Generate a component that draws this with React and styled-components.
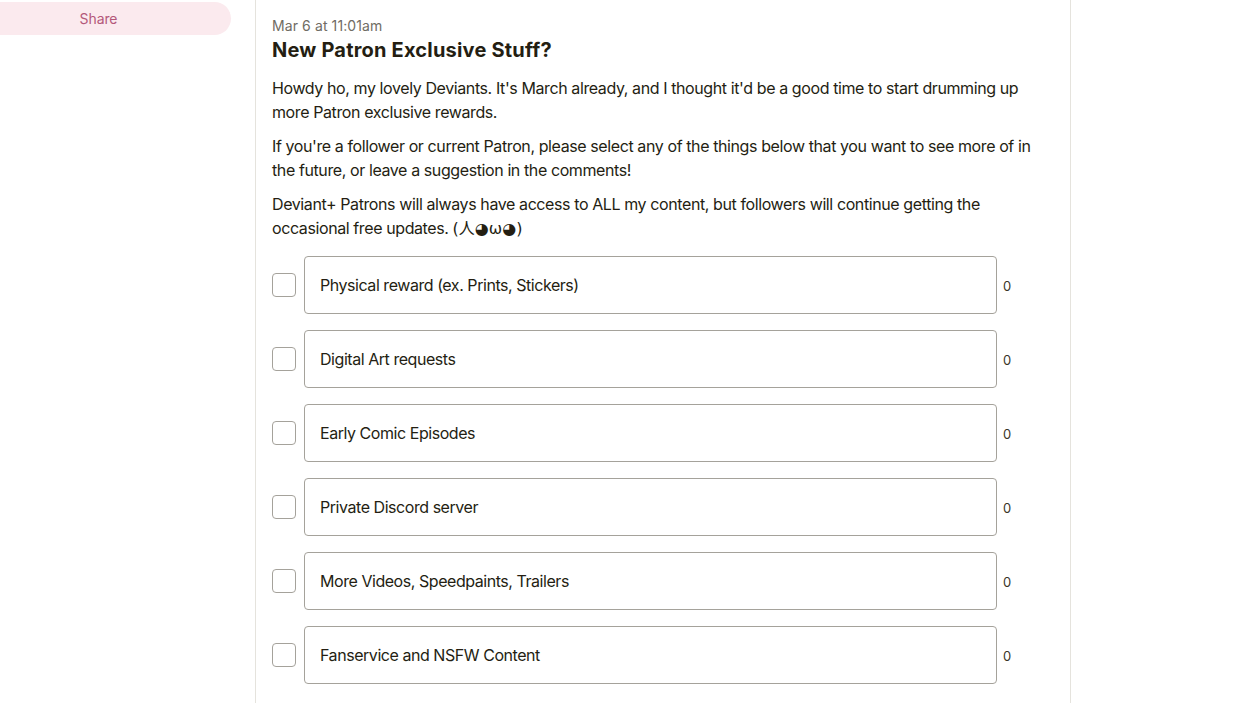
import React from 'react';
import styled, { createGlobalStyle } from 'styled-components';

const GlobalStyle = createGlobalStyle`
    html, body {
        margin: 0;
        padding: 0;
        background: #ffffff;
        font-family: Inter, "DejaVu Sans", "Noto Sans CJK JP", sans-serif;
        color: #241e12;
    }
`

const Page = styled.div`
    display: flex;
    align-items: flex-start;
    height: 703px;
    overflow: hidden;
`
const Sidebar = styled.aside`
    width: 255px;
    flex: 0 0 255px;
    padding-top: 2px;
`
const ShareButton = styled.button`
    display: block;
    width: 231px;
    height: 33px;
    border: none;
    border-radius: 0 17px 17px 0;
    background-color: #fbeaee;
    color: #b4587a;
    font-family: inherit;
    font-size: 14px;
    letter-spacing: -0.1px;
    padding: 0 34px 1px 0;
    cursor: pointer;
`
const Card = styled.article`
    width: 782px;
    min-height: 703px;
    border-left: 1px solid #e5e3dd;
    border-right: 1px solid #e5e3dd;
    padding: 16px 16px 0 16px;
`
const Date = styled.div`
    font-size: 14px;
    line-height: 19px;
    color: #706c64;
    letter-spacing: 0.1px;
`
const Title = styled.h2`
    margin: 1px 0 12px;
    font-size: 20px;
    line-height: 28px;
    font-weight: 700;
    letter-spacing: 0.2px;
`
const Paragraph = styled.p`
    max-width: 764px;
    margin: 0 0 10px;
    font-size: 16px;
    line-height: 24px;
    letter-spacing: -0.4px;
`
const Kaomoji = styled.span`
    font-family: "DejaVu Sans", "Noto Sans CJK JP", sans-serif;
    letter-spacing: 0;
`
const Options = styled.div`
    display: flex;
    flex-direction: column;
    gap: 16px;
    margin-top: 15px;
`
const Option = styled.label`
    display: flex;
    align-items: center;
    gap: 8px;
`
const Check = styled.span`
    flex: 0 0 24px;
    width: 24px;
    height: 24px;
    box-sizing: border-box;
    border: 1px solid #a5a29b;
    border-radius: 4px;
    background: #fff;
`
const Choice = styled.div`
    flex: 1 1 auto;
    height: 58px;
    box-sizing: border-box;
    display: flex;
    align-items: center;
    padding: 0 15px;
    border: 1px solid #a5a29b;
    border-radius: 4px;
    font-size: 16px;
    letter-spacing: -0.45px;
`
const Count = styled.span`
    flex: 0 0 51px;
    font-size: 13px;
    line-height: 16px;
    padding-top: 1px;
    margin-left: -2px;
    color: #3a3528;
`

const options = [
    'Physical reward (ex. Prints, Stickers)',
    'Digital Art requests',
    'Early Comic Episodes',
    'Private Discord server',
    'More Videos, Speedpaints, Trailers',
    'Fanservice and NSFW Content',
]

const App = () => {
    return (
        <>
            <GlobalStyle/>
            <Page>
                <Sidebar>
                    <ShareButton type='button'>Share</ShareButton>
                </Sidebar>
                <Card>
                    <Date>Mar 6 at 11:01am</Date>
                    <Title>New Patron Exclusive Stuff?</Title>
                    <Paragraph>
                        Howdy ho, my lovely Deviants. It's March already, and I thought it'd be a good time to start drumming up more Patron exclusive rewards.
                    </Paragraph>
                    <Paragraph>
                        If you're a follower or current Patron, please select any of the things below that you want to see more of in the future, or leave a suggestion in the comments!
                    </Paragraph>
                    <Paragraph>
                        Deviant+ Patrons will always have access to ALL my content, but followers will continue getting the occasional free updates. <Kaomoji>(人◕ω◕)</Kaomoji>
                    </Paragraph>
                    <Options>
                        {options.map((text, i) => (
                            <Option key={i}>
                                <Check/>
                                <Choice>{text}</Choice>
                                <Count>0</Count>
                            </Option>
                        ))}
                    </Options>
                </Card>
            </Page>
        </>
    )
}

export default App
